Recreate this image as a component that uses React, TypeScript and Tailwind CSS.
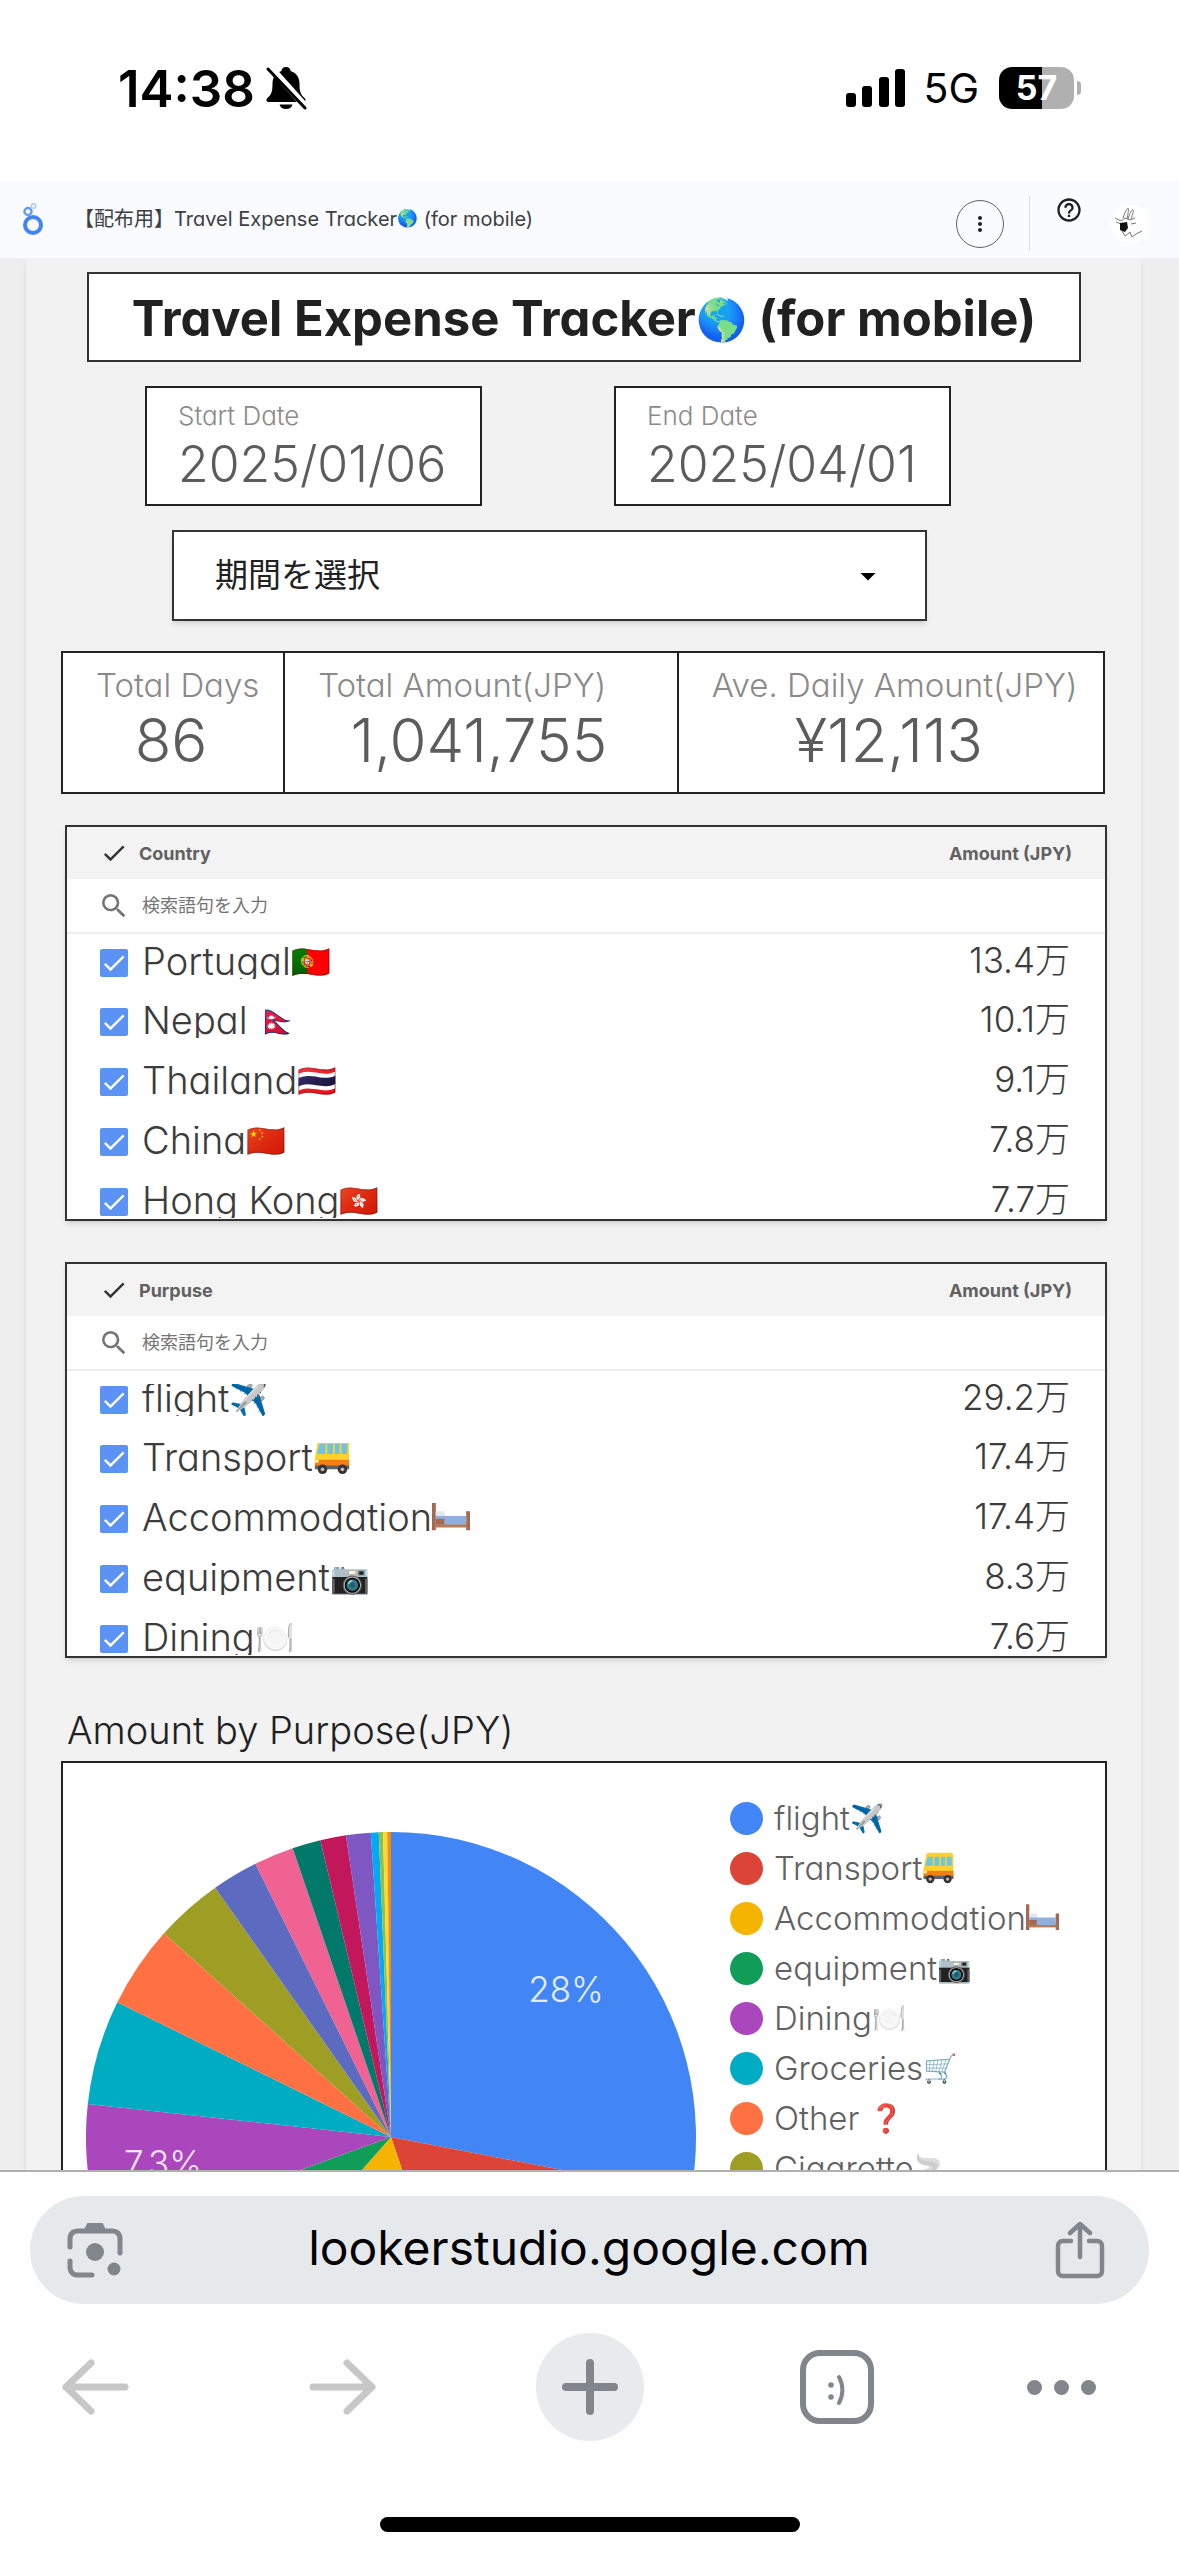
import React from "react";
import { MdArrowDropDown, MdCheck, MdHelpOutline, MdMoreVert, MdSearch } from "react-icons/md";

interface Row {
  name: string;
  emoji: string;
  amount: string;
}

const countries: Row[] = [
  { name: "Portugal", emoji: "🇵🇹", amount: "13.4万" },
  { name: "Nepal ", emoji: "🇳🇵", amount: "10.1万" },
  { name: "Thailand", emoji: "🇹🇭", amount: "9.1万" },
  { name: "China", emoji: "🇨🇳", amount: "7.8万" },
  { name: "Hong Kong", emoji: "🇭🇰", amount: "7.7万" },
];

const purposes: Row[] = [
  { name: "flight", emoji: "✈️", amount: "29.2万" },
  { name: "Transport", emoji: "bus", amount: "17.4万" },
  { name: "Accommodation", emoji: "bed", amount: "17.4万" },
  { name: "equipment", emoji: "📷", amount: "8.3万" },
  { name: "Dining", emoji: "🍽️", amount: "7.6万" },
];

const legend = [
  { name: "flight", emoji: "✈️", color: "#4285f4" },
  { name: "Transport", emoji: "bus", color: "#db4437" },
  { name: "Accommodation", emoji: "bed", color: "#f4b400" },
  { name: "equipment", emoji: "📷", color: "#0f9d58" },
  { name: "Dining", emoji: "🍽️", color: "#ab47bc" },
  { name: "Groceries", emoji: "🛒", color: "#00acc1" },
  { name: "Other ", emoji: "❓", color: "#ff7043" },
  { name: "Cigarette", emoji: "🚬", color: "#9e9d24" },
];

// end angle of every slice, clockwise from 12 o'clock
const slices = [
  { end: 100.9, color: "#4285f4" },
  { end: 161.3, color: "#db4437" },
  { end: 221.5, color: "#f4b400" },
  { end: 250, color: "#0f9d58" },
  { end: 276.2, color: "#ab47bc" },
  { end: 296.2, color: "#00acc1" },
  { end: 311.9, color: "#ff7043" },
  { end: 324.8, color: "#9e9d24" },
  { end: 333.6, color: "#5c6bc0" },
  { end: 341.2, color: "#f06292" },
  { end: 346.6, color: "#00796b" },
  { end: 351.5, color: "#c2185b" },
  { end: 356.2, color: "#7e57c2" },
  { end: 357.7, color: "#03a9f4" },
  { end: 358.5, color: "#8bc34a" },
  { end: 359.3, color: "#fdd835" },
  { end: 360, color: "#fb8c00" },
];

const RADIUS = 305;

function point(angle: number) {
  const rad = (angle * Math.PI) / 180;
  return `${RADIUS + RADIUS * Math.sin(rad)} ${RADIUS - RADIUS * Math.cos(rad)}`;
}

function PieChart() {
  return (
    <svg viewBox="0 0 610 610" className="w-[610px] h-[610px] shrink-0">
      {slices.map((slice, i) => {
        const start = i === 0 ? 0 : slices[i - 1].end;
        return (
          <path
            key={slice.color}
            fill={slice.color}
            d={`M${RADIUS} ${RADIUS} L${point(start)} A${RADIUS} ${RADIUS} 0 0 1 ${point(slice.end)} Z`}
          />
        );
      })}
      <g className="fill-white/85 text-[35px] font-light" textAnchor="middle">
        <text x="480" y="170">28%</text>
        <text x="77" y="344">7.3%</text>
      </g>
    </svg>
  );
}

function Bus() {
  return (
    <svg viewBox="0 0 40 40" role="img" aria-label="bus" className="-mt-[12px] inline-block h-[1em] w-[1em] align-[-4px]">
      <path d="M5 5c0-2 2-3 4-3h25c3 0 4 1 4 4v27H2V22z" fill="#ffd02e" />
      <path d="M2 24h36v9H2z" fill="#f57f17" />
      <path d="M7 7h6v11H4z" fill="#6fc3df" />
      <path d="M15 7h6v11h-6zM23 7h5v11h-5zM30 7h6v11h-6z" fill="#6fc3df" />
      <path d="M2 30h36v4H2z" fill="#5f6368" />
      <circle cx="10" cy="34" r="5" fill="#333" />
      <circle cx="31" cy="34" r="5" fill="#333" />
      <circle cx="10" cy="34" r="2" fill="#bbb" />
      <circle cx="31" cy="34" r="2" fill="#bbb" />
      <rect x="2" y="24" width="4" height="3" fill="#fff59d" />
    </svg>
  );
}

function Bed() {
  return (
    <svg viewBox="0 0 40 40" role="img" aria-label="bed" className="-mt-[12px] inline-block h-[1em] w-[1em] align-[-4px]">
      <path d="M0 4h4v31H0zM36 15h4v20h-4z" fill="#a5694f" />
      <path d="M3 26h34v6H3z" fill="#b97a56" />
      <path d="M4 17h9v3h23v9H4z" fill="#8fb0dc" />
      <path d="M4 15h9v5H4z" fill="#dfe7f2" />
      <path d="M4 23h9v6H4z" fill="#a5694f" />
    </svg>
  );
}

function Emoji({ children }: { children: string }) {
  if (children === "bus") return <Bus />;
  if (children === "bed") return <Bed />;
  return <span className="align-[2px] text-[84%]">{children}</span>;
}

function StatusBar() {
  return (
    <div className="flex h-[180px] shrink-0 items-start justify-between bg-white pl-[118px] pr-[98px] pt-[58px] text-black">
      <div className="flex h-[60px] items-center gap-[10px]">
        <span className="text-[51px] leading-none font-semibold">14:38</span>
        <svg viewBox="0 0 42 44" className="h-[44px] w-[42px]">
          <path d="M21 1c-3 0-4.500 2-4.500 4C10 7 7.500 12 7.500 18c0 8-1.500 11-5 14-2 2-1 4 1.500 4h34c2.500 0 3.500-2 1.500-4-3.500-3-5-6-5-14 0-6-2.500-11-9-13 0-2-1.500-4-4.500-4z" />
          <path d="M14.500 38.500h13c-.8 3-3.300 4.500-6.500 4.500s-5.700-1.500-6.500-4.500z" />
          <path d="M5 1l36 40" stroke="#fff" strokeWidth="7" />
          <path d="M3 3l37 39" stroke="#000" strokeWidth="3" strokeLinecap="round" />
        </svg>
      </div>
      <div className="flex h-[60px] items-center">
        <svg viewBox="0 0 60 38" className="h-[38px] w-[60px]">
          <rect x="0" y="24" width="10" height="14" rx="3" />
          <rect x="16" y="17" width="10" height="21" rx="3" />
          <rect x="33" y="8" width="10" height="30" rx="3" />
          <rect x="49" y="0" width="10" height="38" rx="3" />
        </svg>
        <span className="ml-[17px] text-[41px] leading-none">5G</span>
        <div className="ml-[20px] flex h-[42px] w-[75px] items-center justify-center rounded-[13px] bg-linear-to-r from-black from-57% to-[#b0b0b0] to-57% text-[34px] leading-none font-bold text-white">
          57
        </div>
        <div className="ml-[3px] h-[14px] w-[4px] rounded-r-full bg-[#b0b0b0]" />
      </div>
    </div>
  );
}

function ReportHeader() {
  return (
    <header className="flex h-[78px] shrink-0 items-center bg-[#f9fbff] pl-[21px] pr-[30px]">
      <svg viewBox="0 0 24 34" className="h-[34px] w-[24px]" fill="none">
        <circle cx="12" cy="23" r="8" stroke="#4285f4" strokeWidth="4" />
        <circle cx="7" cy="9.500" r="3.500" stroke="#669df6" strokeWidth="2.500" />
        <circle cx="12.500" cy="4" r="2.300" stroke="#aecbfa" strokeWidth="1.500" />
      </svg>
      <h2 className="ml-[29px] flex-1 text-[20px] text-[#3c4043]">
        【配布用】Travel Expense Tracker<Emoji>🌎</Emoji> (for mobile)
      </h2>
      <button
        type="button"
        aria-label="More options"
        className="mt-[9px] flex h-[48px] w-[48px] items-center justify-center rounded-full border border-[#5f6368]"
      >
        <MdMoreVert className="h-[24px] w-[24px] text-[#202124]" />
      </button>
      <div className="mx-[25px] mt-[9px] h-[55px] w-px bg-[#dadce0]" />
      <button type="button" aria-label="Help" className="mb-[18px]">
        <MdHelpOutline className="h-[28px] w-[28px] text-[#1f1f1f]" />
      </button>
      <button
        type="button"
        aria-label="Account"
        className="ml-[28px] mt-[9px] h-[38px] w-[38px] rounded-full bg-white"
      >
        <svg viewBox="0 0 38 38" fill="none" stroke="#777" strokeWidth="1">
          <path d="M12 13c2-6 4-10 5-10s0 6-1 11M17 14c2-6 4-10 5-9s-1 6-2 10" />
          <path d="M4 13l6 3 4-3 5 2 5-2M5 17l5 2M20 19l5-1" />
          <path d="M9 18l7-1 1 6-3 4-5-2z" fill="#111" stroke="none" />
          <path d="M11 26l3 5 5-4 2 5 4-3 6-3" />
        </svg>
      </button>
    </header>
  );
}

function DateCard({ label, value }: { label: string; value: string }) {
  return (
    <div className="h-[120px] w-[337px] border-2 border-[#222] bg-white pl-[31px] pt-[11px]">
      <p className="text-[26px] leading-[34px] font-light text-[#8a8a8a]">{label}</p>
      <p className="text-[50px] leading-[62px] font-light text-[#5c5c5c]">{value}</p>
    </div>
  );
}

function Score({ label, value }: { label: string; value: string }) {
  return (
    <div className="border-l-2 border-[#222] pt-[12px] pr-[4px] first:border-l-0">
      <p className="pl-[33px] text-[33px] leading-[40px] font-light whitespace-nowrap text-[#8a8a8a]">
        {label}
      </p>
      <p className="text-center text-[60px] leading-[70px] font-light text-[#5c5c5c]">{value}</p>
    </div>
  );
}

function FilterTable({ id, title, rows }: { id: string; title: string; rows: Row[] }) {
  return (
    <section className="h-[396px] overflow-hidden border-2 border-[#333] bg-white shadow-md">
      <table className="w-full">
        <thead>
          <tr className="h-[52px] bg-[#f3f3f3] text-[18px] font-semibold text-[#616161]">
            <th className="pl-[33px] text-left">
              <span className="flex items-center gap-[11px]">
                <MdCheck className="h-[28px] w-[28px] text-[#333]" />
                {title}
              </span>
            </th>
            <th className="pr-[33px] text-right">Amount (JPY)</th>
          </tr>
        </thead>
        <tbody>
          <tr className="h-[54px] border-b-2 border-[#ececec]">
            <td colSpan={2} className="pl-[31px]">
              <div className="flex items-center gap-[12px]">
                <MdSearch className="h-[32px] w-[32px] text-[#757575]" />
                <input
                  type="search"
                  aria-label={`${title} search`}
                  placeholder="検索語句を入力"
                  className="flex-1 text-[18px] outline-none placeholder:text-[#757575]"
                />
              </div>
            </td>
          </tr>
          {rows.map((row, i) => (
            <tr key={row.name} className="h-[60px] font-light text-[#3c3c3c]">
              <td className="pb-[2px] pl-[33px]">
                <div className="flex items-center gap-[14px]">
                  <span className="relative h-[28px] w-[28px]">
                    <input
                      id={`${id}-${i}`}
                      type="checkbox"
                      defaultChecked
                      className="block h-[28px] w-[28px] appearance-none rounded-[2px] bg-[#5b93f5]"
                    />
                    <MdCheck className="pointer-events-none absolute inset-0 h-[28px] w-[28px] text-white" />
                  </span>
                  <label
                    htmlFor={`${id}-${i}`}
                    className="h-[32px] overflow-hidden text-[38px] leading-[28px] whitespace-pre"
                  >
                    {row.name}
                    <Emoji>{row.emoji}</Emoji>
                  </label>
                </div>
              </td>
              <td className="pr-[35px] pb-[8px] text-right text-[35px] leading-[40px]">{row.amount}</td>
            </tr>
          ))}
        </tbody>
      </table>
    </section>
  );
}

function Report() {
  return (
    <main className="min-h-0 flex-1 overflow-hidden border-b-2 border-[#b0b0b0] bg-[#eeeeee] pl-[26px] pr-[38px]">
      <div className="h-full bg-[#f2f2f2] pt-[14px] pr-[34px] pl-[35px] shadow-md">
        <h1 className="mx-[26px] flex h-[90px] items-center justify-center border-2 border-[#333] bg-white pt-[4px] text-[49px] font-bold whitespace-nowrap text-[#212121]">
          <span>
            Travel Expense Tracker<Emoji>🌎</Emoji> (for mobile)
          </span>
        </h1>
        <div className="mt-[24px] flex gap-[132px] pl-[84px]">
          <DateCard label="Start Date" value="2025/01/06" />
          <DateCard label="End Date" value="2025/04/01" />
        </div>
        <div className="relative mt-[24px] ml-[111px] w-[755px]">
          <select
            aria-label="期間を選択"
            className="h-[91px] w-full appearance-none border-2 border-[#333] bg-white px-[41px] text-[33px] text-[#212121] shadow-md"
          >
            <option>期間を選択</option>
          </select>
          <MdArrowDropDown className="pointer-events-none absolute top-[28px] right-[41px] h-[36px] w-[36px] text-black" />
        </div>
        <div className="mt-[30px] mr-[2px] grid h-[143px] grid-cols-[221fr_395fr_428fr] border-2 border-[#222] bg-white">
          <Score label="Total Days" value="86" />
          <Score label="Total Amount(JPY)" value="1,041,755" />
          <Score label="Ave. Daily Amount(JPY)" value="¥12,113" />
        </div>
        <div className="mt-[31px] flex flex-col gap-[41px] pl-[4px]">
          <FilterTable id="country" title="Country" rows={countries} />
          <FilterTable id="purpose" title="Purpuse" rows={purposes} />
        </div>
        <h3 className="mt-[46px] pl-[6px] text-[38px] leading-[52px] font-light text-[#212121]">
          Amount by Purpose(JPY)
        </h3>
        <section className="mt-[5px] flex h-[760px] gap-[34px] border-2 border-[#222] bg-white pt-[30px] pl-[23px]">
          <div className="pt-[39px]">
            <PieChart />
          </div>
          <ul className="text-[33px] leading-[50px] font-light text-[#616161]">
            {legend.map((item) => (
              <li key={item.name} className="flex h-[50px] items-center gap-[11px] whitespace-pre">
                <span className="h-[33px] w-[33px] rounded-full" style={{ backgroundColor: item.color }} />
                <span>
                  {item.name}
                  <Emoji>{item.emoji}</Emoji>
                </span>
              </li>
            ))}
          </ul>
        </section>
      </div>
    </main>
  );
}

function BrowserBar() {
  return (
    <footer className="h-[384px] shrink-0 bg-[#fefefe] px-[30px] pt-[24px]">
      <div className="flex h-[108px] items-center justify-between rounded-full bg-[#e6e9ec] pl-[36px] pr-[43px]">
        <button type="button" aria-label="Search with camera">
          <svg viewBox="0 0 58 58" className="h-[58px] w-[58px]" fill="none" stroke="#80868b" strokeWidth="5" strokeLinecap="round">
            <path d="M4 26V18c0-5 3-8 8-8h34c5 0 8 3 8 8v14M4 40v6c0 5 3 8 8 8h14" />
            <path d="M19 9l3-6h14l3 6z" fill="#80868b" strokeWidth="2" />
            <circle cx="29" cy="31" r="9" fill="#80868b" stroke="none" />
            <circle cx="48" cy="48" r="6.500" fill="#80868b" stroke="none" />
          </svg>
        </button>
        <button type="button" className="pb-[4px] text-[48px] leading-none text-black">
          lookerstudio.google.com
        </button>
        <button type="button" aria-label="Share">
          <svg viewBox="0 0 52 58" className="h-[58px] w-[52px]" fill="none" stroke="#80868b" strokeWidth="4.500" strokeLinecap="round" strokeLinejoin="round">
            <path d="M17 20H9c-3 0-5 2-5 5v25c0 3 2 5 5 5h34c3 0 5-2 5-5V25c0-3-2-5-5-5h-8M26 36V4M16 12L26 3l10 9" />
          </svg>
        </button>
      </div>
      <nav className="-mx-[58px] mt-[29px] grid h-[108px] grid-cols-5 items-center justify-items-center">
        <button type="button" aria-label="Back">
          <svg viewBox="0 0 68 60" className="h-[60px] w-[68px]" fill="none" stroke="#c7c7c7" strokeWidth="7" strokeLinecap="round" strokeLinejoin="round">
            <path d="M63 30H4M29 6L4 30l25 24" />
          </svg>
        </button>
        <button type="button" aria-label="Forward">
          <svg viewBox="0 0 68 60" className="h-[60px] w-[68px]" fill="none" stroke="#c7c7c7" strokeWidth="7" strokeLinecap="round" strokeLinejoin="round">
            <path d="M4 30h59M38 6l25 24-25 24" />
          </svg>
        </button>
        <button type="button" aria-label="New tab" className="flex h-[108px] w-[108px] items-center justify-center rounded-full bg-[#e8eaed]">
          <svg viewBox="0 0 56 56" className="h-[56px] w-[56px]" stroke="#80868b" strokeWidth="8" strokeLinecap="round">
            <path d="M28 4v48M4 28h48" />
          </svg>
        </button>
        <button type="button" aria-label="Tabs" className="flex h-[74px] w-[74px] items-center justify-center rounded-[20px] border-[6px] border-[#80868b]">
          <svg viewBox="0 0 20 34" className="mt-[6px] h-[34px] w-[20px]" fill="none" stroke="#80868b" strokeWidth="4" strokeLinecap="round">
            <path d="M12 4c4.500 8 4.500 18 0 26" />
            <circle cx="4" cy="12" r="2.800" fill="#80868b" stroke="none" />
            <circle cx="4" cy="24" r="2.800" fill="#80868b" stroke="none" />
          </svg>
        </button>
        <button type="button" aria-label="Menu" className="mr-[44px] flex gap-[12px]">
          <span className="h-[15px] w-[15px] rounded-full bg-[#80868b]" />
          <span className="h-[15px] w-[15px] rounded-full bg-[#80868b]" />
          <span className="h-[15px] w-[15px] rounded-full bg-[#80868b]" />
        </button>
      </nav>
      <div className="mx-auto mt-[76px] h-[15px] w-[420px] rounded-full bg-black" />
    </footer>
  );
}

export default function App() {
  return (
    <div className="flex h-screen flex-col overflow-hidden font-['Inter','Noto_Sans_CJK_JP',sans-serif] [font-feature-settings:'cv11']">
      <StatusBar />
      <ReportHeader />
      <Report />
      <BrowserBar />
    </div>
  );
}
